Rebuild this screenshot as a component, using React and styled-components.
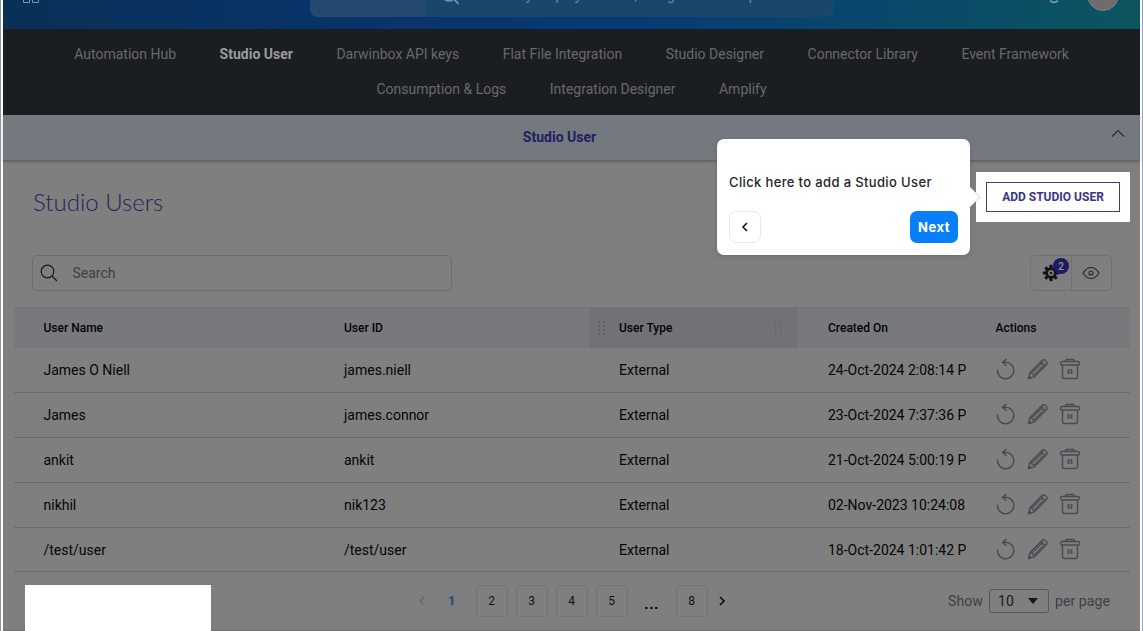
import styled, { createGlobalStyle } from 'styled-components';

const GlobalStyle = createGlobalStyle`
  * {
    box-sizing: border-box;
  }

  body {
    background: #fff;
    font-family: Roboto, sans-serif;
    margin: 0;
    overflow: hidden;
  }

  button {
    font-family: inherit;
    margin: 0;
    padding: 0;
  }
`;

const Frame = styled.div`
  border-left: 1px solid #87979e;
  border-right: 1px solid #8fa3bb;
  height: 631px;
  overflow: hidden;
  padding: 0 2px;
  position: relative;
`;

const Page = styled.div`
  background: #7f7f7f;
  border-bottom: 1px solid #6f6f70;
  display: flex;
  flex-direction: column;
  height: 631px;
`;

const TopBar = styled.header`
  background: linear-gradient(90deg, #093057 0%, #08346a 33%, #083a75 55%, #094a6a 80%, #0d5460 100%);
  display: flex;
  flex: none;
  height: 29px;
  justify-content: space-between;
  overflow: hidden;
`;

const TopSide = styled.div`
  display: flex;
  gap: 23px;
  justify-content: ${({ end }) => (end ? 'flex-end' : 'flex-start')};
  padding: 0 21px 0 20px;
  width: 307px;
`;

const AppsIcon = styled.svg`
  margin-top: -13px;
`;

const BellIcon = styled.svg`
  margin-top: -17px;
`;

const Avatar = styled.div`
  background: #726b6a;
  border: 1px solid #6d8389;
  border-radius: 50%;
  height: 32px;
  margin-top: -21px;
  width: 32px;
`;

const GlobalSearch = styled.div`
  background: #19476c;
  border-radius: 0 0 8px 8px;
  color: #6d8ba3;
  display: flex;
  flex: none;
  font-size: 14px;
  height: 17px;
  overflow: hidden;
  width: 524px;
`;

const SearchScope = styled.div`
  background: #26496f;
  width: 116px;
`;

const GlobalSearchIcon = styled.svg`
  flex: none;
  margin: -15px 12px 0 14px;
`;

const GlobalPlaceholder = styled.span`
  line-height: 16px;
  margin-top: -13px;
  white-space: nowrap;
`;

const Nav = styled.nav`
  align-content: flex-start;
  background: #1b1e20;
  color: #68696a;
  column-gap: 43.5px;
  display: flex;
  flex: none;
  flex-wrap: wrap;
  font-size: 14px;
  height: 86px;
  justify-content: center;
  line-height: 35px;
  padding: 8px 50px;
`;

const NavItem = styled.a`
  color: ${({ active }) => (active ? '#9a9b9c' : 'inherit')};
  font-weight: ${({ active }) => (active ? 700 : 400)};
`;

const SubBar = styled.div`
  align-items: center;
  background: #74787f;
  border-bottom: 1px solid #606367;
  box-shadow: 0 1px 3px rgba(0, 0, 0, 0.2);
  display: flex;
  flex: none;
  height: 46px;
  padding: 0 15px 1px 0;
`;

const SubTitle = styled.strong`
  color: #1f1f62;
  flex: 1;
  font-size: 14px;
  padding-left: 5px;
  text-align: center;
`;

const CollapseIcon = styled.svg`
  margin: -7px 0 0;
`;

const TitleRow = styled.div`
  align-items: center;
  display: flex;
  flex: none;
  height: 50px;
  justify-content: space-between;
  margin-top: 11px;
  padding: 0 10px 0 30px;
`;

const Title = styled.h1`
  color: #24245c;
  font-family: Lato, sans-serif;
  font-size: 24px;
  font-weight: 300;
  margin: 8px 0 0;
`;

const Spotlight = styled.div`
  background: #fff;
  height: 50px;
  padding: 10px;
  width: 154px;
`;

const AddButton = styled.button`
  background: #fff;
  border: 1px solid #3f4073;
  color: #373785;
  font-size: 12px;
  font-weight: 700;
  height: 30px;
  width: 134px;
`;

const Toolbar = styled.div`
  display: flex;
  flex: none;
  height: 36px;
  justify-content: space-between;
  margin: 33px 28px 16px 29px;
`;

const SearchBox = styled.label`
  align-items: center;
  border: 1px solid #6b6d70;
  border-radius: 5px;
  color: #3c4045;
  display: flex;
  font-size: 14px;
  gap: 14.5px;
  padding-left: 7px;
  width: 420px;
`;

const ToolGroup = styled.div`
  border: 1px solid #707173;
  border-radius: 5px;
  display: flex;
  width: 82px;
`;

const Tool = styled.div`
  align-items: center;
  display: flex;
  flex: 1;
  justify-content: center;
  position: relative;

  & + & {
    border-left: 1px solid #707173;
  }
`;

const Badge = styled.span`
  background: #1c1c61;
  border-radius: 50%;
  color: #93939f;
  font-size: 10px;
  font-weight: 500;
  height: 16px;
  left: 22px;
  line-height: 17px;
  position: absolute;
  text-align: center;
  top: 2px;
  width: 16px;
`;

const Table = styled.div`
  margin: 0 10px 0 11px;
`;

const Row = styled.div`
  align-items: center;
  border-bottom: 1px solid #6a6a6b;
  display: grid;
  font-size: 14px;
  grid-template-columns: 300px 275px 209px 167.5px 1fr;
  height: 45px;

  &:last-child {
    height: 44px;
  }
`;

const HeadRow = styled(Row)`
  background: #78797c;
  border-bottom: 0;
  border-top: 1px solid #727479;
  font-size: 12px;
  font-weight: 500;
  height: 41px;
`;

const Cell = styled.div`
  color: #050505;
  overflow: hidden;
  padding-left: 30px;
  white-space: nowrap;

  &:first-child {
    padding-left: 29.5px;
  }
`;

const HeadCell = styled.div`
  align-items: center;
  align-self: stretch;
  background: ${({ active }) => (active ? '#717177' : 'transparent')};
  color: #030303;
  display: flex;
  justify-content: space-between;
  padding: 0 14px 0 30px;
  position: relative;

  &:first-child {
    padding-left: 29.5px;
  }
`;

const DragHandle = styled.svg`
  left: 8px;
  position: absolute;
`;

const Actions = styled.div`
  display: flex;
  gap: 10px;
  padding: 0 0 2px 29px;
`;

const Footer = styled.footer`
  align-items: center;
  display: flex;
  flex: 1;
  padding: 0 28px 0 22px;
`;

const BlankPanel = styled.div`
  align-self: flex-end;
  background: #fff;
  height: 46px;
  margin-bottom: -1px;
  width: 186px;
`;

const Pager = styled.div`
  display: flex;
  gap: 8px;
  margin-left: 207.6px;
`;

const PageButton = styled.button`
  background: ${({ active }) => (active ? '#7c7e80' : 'transparent')};
  border: 1px solid ${({ active }) => (active ? '#7c7e80' : '#747475')};
  border-radius: 3px;
  color: ${({ active }) => (active ? '#1f4670' : '#111')};
  font-size: 12px;
  font-weight: ${({ active }) => (active ? 700 : 400)};
  height: 32px;
  width: 32px;
`;

const Ellipsis = styled.span`
  font-size: 15px;
  font-weight: 700;
  height: 32px;
  letter-spacing: 0.5px;
  line-height: 38px;
  text-align: center;
  width: 32px;
`;

const Arrow = styled.svg`
  margin: 10px ${({ next }) => (next ? '0 0 2px' : '2px 0 -1px')};
`;

const PerPage = styled.div`
  align-items: center;
  color: #3c4045;
  display: flex;
  font-size: 14px;
  gap: 6px;
  letter-spacing: 0.1px;
  margin-left: auto;
  margin-right: 2px;
`;

const Select = styled.div`
  align-items: center;
  border: 1px solid #58595b;
  border-radius: 3px;
  color: #1a1a1a;
  display: flex;
  height: 24px;
  justify-content: space-between;
  padding: 0 10px 0 8px;
  width: 60px;
`;

const Popover = styled.div`
  background: #fff;
  border-radius: 7px;
  box-shadow: 0 2px 6px rgba(0, 0, 0, 0.14);
  display: flex;
  flex-direction: column;
  font-family: Inter, sans-serif;
  height: 116px;
  justify-content: space-between;
  left: 716px;
  padding: 34px 12px 12px;
  position: absolute;
  top: 139px;
  width: 253px;
`;

const PopoverArrow = styled.svg`
  position: absolute;
  right: -11px;
  top: 47px;
`;

const PopoverText = styled.p`
  color: #22252b;
  font-size: 13px;
  font-weight: 500;
  letter-spacing: 0.36px;
  line-height: 19px;
  margin: 0;
  white-space: nowrap;
`;

const PopoverActions = styled.div`
  display: flex;
  justify-content: space-between;
`;

const BackButton = styled.button`
  align-items: center;
  background: #fff;
  border: 1px solid #e9e9eb;
  border-radius: 7px;
  display: flex;
  height: 32px;
  justify-content: center;
  width: 32px;
`;

const NextButton = styled.button`
  background: #087ff8;
  border: 0;
  border-radius: 7px;
  color: #fff;
  font-size: 13px;
  font-weight: 700;
  height: 32px;
  letter-spacing: 0.5px;
  width: 48px;
`;

const navItems = [
  'Automation Hub',
  'Studio User',
  'Darwinbox API keys',
  'Flat File Integration',
  'Studio Designer',
  'Connector Library',
  'Event Framework',
  'Consumption & Logs',
  'Integration Designer',
  'Amplify',
];

const users = [
  { name: 'James O Niell', id: 'james.niell', created: '24-Oct-2024 2:08:14 P' },
  { name: 'James', id: 'james.connor', created: '23-Oct-2024 7:37:36 P' },
  { name: 'ankit', id: 'ankit', created: '21-Oct-2024 5:00:19 P' },
  { name: 'nikhil', id: 'nik123', created: '02-Nov-2023 10:24:08' },
  { name: '/test/user', id: '/test/user', created: '18-Oct-2024 1:01:42 P' },
];

const gearTeeth = [0, 45, 90, 135, 180, 225, 270, 315];

const GearIcon = () => (
  <svg width="18" height="18" viewBox="0 0 18 18" fill="#151515">
    {gearTeeth.map((angle) => (
      <rect key={angle} x="7.4" y="0.8" width="3.2" height="5" rx="1" transform={`rotate(${angle} 9 9)`} />
    ))}
    <circle cx="9" cy="9" r="4.4" fill="none" stroke="#151515" strokeWidth="2.8" />
    <circle cx="9" cy="9" r="1.3" />
  </svg>
);

const EyeIcon = () => (
  <svg width="18" height="14" viewBox="0 0 18 14" fill="none" stroke="#262626" strokeWidth="1.1">
    <path d="M1 7Q4.5 1.5 9 1.5T17 7Q13.5 12.5 9 12.5T1 7Z" />
    <circle cx="9" cy="7" r="2" />
  </svg>
);

const RowActions = () => (
  <Actions>
    <svg width="22" height="22" viewBox="0 0 22 22" fill="none" stroke="#474c53" strokeWidth="1.5">
      <path d="M2.5 11.5A8.2 8.2 0 1 0 10.7 4.3H8" />
      <path d="M11.5 1L7.5 4.3L11.5 7.8" />
    </svg>
    <svg width="22" height="22" viewBox="0 0 22 22" fill="none" stroke="#474c53" strokeWidth="1.3" strokeLinejoin="round">
      <path d="M1.5 20.5L3 14.5L15 2.5Q16.7 .9 18.5 2.6L19.3 3.4Q21 5.2 19.4 6.9L7.4 18.9Z" />
      <path d="M3 14.5L5 15L5.3 16.7L7.2 17L7.4 18.9M5 15L16.2 3.8M7.2 17L18.3 5.8M13.5 4L18 8.4" />
      <path d="M1.5 20.5L2.2 18L4 19.8Z" fill="#474c53" />
    </svg>
    <svg width="22" height="22" viewBox="0 0 22 22" fill="none" stroke="#474c53" strokeWidth="1.4">
      <rect x="1.5" y="3.5" width="19" height="3.5" rx="1.5" />
      <path d="M6 3.5L7.5 1.5H14.5L16 3.5M3.5 7V19Q3.5 20.5 5 20.5H17Q18.5 20.5 18.5 19V7" />
      <path d="M9.5 11V16M12.5 11V16" strokeWidth="1.8" />
    </svg>
  </Actions>
);

const TableHeader = () => (
  <HeadRow>
    <HeadCell>User Name</HeadCell>
    <HeadCell>User ID</HeadCell>
    <HeadCell active>
      <DragHandle width="10" height="16" viewBox="0 0 10 16" fill="#55555d">
        {[1, 5, 9, 13].map((y) => (
          <g key={y}>
            <rect x="1.5" y={y} width="1.5" height="1.5" />
            <rect x="6" y={y} width="1.5" height="1.5" />
          </g>
        ))}
      </DragHandle>
      User Type
      <svg width="12" height="14" viewBox="0 0 12 14" fill="none" stroke="#67676f">
        <path d="M3.5 13V1.5M1.5 3.5L3.5 1.5M8.5 1V12.5M8.5 12.5L10.5 10.5" />
      </svg>
    </HeadCell>
    <HeadCell>Created On</HeadCell>
    <HeadCell>Actions</HeadCell>
  </HeadRow>
);

const Pagination = () => (
  <Pager>
    <Arrow width="8" height="12" viewBox="0 0 8 12" fill="none" stroke="#666" strokeWidth="1.3">
      <path d="M6 2L2 6L6 10" />
    </Arrow>
    {[1, 2, 3, 4, 5].map((page) => (
      <PageButton key={page} active={page === 1}>
        {page}
      </PageButton>
    ))}
    <Ellipsis>...</Ellipsis>
    <PageButton>8</PageButton>
    <Arrow next width="8" height="12" viewBox="0 0 8 12" fill="none" stroke="#0c0c0c" strokeWidth="1.6">
      <path d="M2 2L6 6L2 10" />
    </Arrow>
  </Pager>
);

const TourPopover = () => (
  <Popover>
    <PopoverArrow width="12" height="22" viewBox="0 0 12 22">
      <path d="M0 0L11 11L0 22Z" fill="#fff" />
      <path d="M6 6L11 11L6 16" fill="none" stroke="#d8d8d8" />
    </PopoverArrow>
    <PopoverText>Click here to add a Studio User</PopoverText>
    <PopoverActions>
      <BackButton aria-label="Back">
        <svg width="8" height="12" viewBox="0 0 8 12" fill="none" stroke="#202124" strokeWidth="1.7">
          <path d="M6 2L2 6L6 10" />
        </svg>
      </BackButton>
      <NextButton>Next</NextButton>
    </PopoverActions>
  </Popover>
);

const App = () => {
  return (
    <Frame>
      <GlobalStyle />
      <Page>
        <TopBar>
          <TopSide>
            <AppsIcon width="16" height="16" viewBox="0 0 16 16" fill="none" stroke="#8095a8">
              <path d="M.5 .5H6.5V6.5H.5ZM9.5 .5H15.5V6.5H9.5ZM.5 9.5H6.5V15.5H.5ZM9.5 9.5H15.5V15.5H9.5Z" />
            </AppsIcon>
          </TopSide>
          <GlobalSearch>
            <SearchScope />
            <GlobalSearchIcon width="20" height="20" viewBox="0 0 20 20" fill="none" stroke="#8298ac" strokeWidth="1.6">
              <circle cx="9" cy="9" r="7" />
              <path d="M14 14L18.5 19" />
            </GlobalSearchIcon>
            <GlobalPlaceholder>Search by employee name, designation or department</GlobalPlaceholder>
          </GlobalSearch>
          <TopSide end>
            <BellIcon width="20" height="22" viewBox="0 0 20 22" fill="none" stroke="#8ba2a9" strokeWidth="1.5">
              <path d="M3 16H17L15.5 13V8A5.5 5.5 0 0 0 4.5 8V13ZM6 17.5Q10 21.5 14 17.5" />
            </BellIcon>
            <Avatar />
          </TopSide>
        </TopBar>
        <Nav>
          {navItems.map((item) => (
            <NavItem key={item} active={item === 'Studio User'}>
              {item}
            </NavItem>
          ))}
        </Nav>
        <SubBar>
          <SubTitle>Studio User</SubTitle>
          <CollapseIcon width="14" height="9" viewBox="0 0 14 9" fill="none" stroke="#282b30" strokeWidth="1.2">
            <path d="M1 7.5L7 1.5L13 7.5" />
          </CollapseIcon>
        </SubBar>
        <TitleRow>
          <Title>Studio Users</Title>
          <Spotlight>
            <AddButton>ADD STUDIO USER</AddButton>
          </Spotlight>
        </TitleRow>
        <Toolbar>
          <SearchBox>
            <svg width="18" height="18" viewBox="0 0 18 18" fill="none" stroke="#1b1b1b" strokeWidth="1.2">
              <circle cx="7.5" cy="7.5" r="6.3" />
              <path d="M12 12L17 17" />
            </svg>
            Search
          </SearchBox>
          <ToolGroup>
            <Tool>
              <GearIcon />
              <Badge>2</Badge>
            </Tool>
            <Tool>
              <EyeIcon />
            </Tool>
          </ToolGroup>
        </Toolbar>
        <Table>
          <TableHeader />
          {users.map((user) => (
            <Row key={user.name}>
              <Cell>{user.name}</Cell>
              <Cell>{user.id}</Cell>
              <Cell>External</Cell>
              <Cell>{user.created}</Cell>
              <RowActions />
            </Row>
          ))}
        </Table>
        <Footer>
          <BlankPanel />
          <Pagination />
          <PerPage>
            Show
            <Select>
              10
              <svg width="10" height="6" viewBox="0 0 10 6">
                <path d="M0 0H10L5 6Z" fill="#161616" />
              </svg>
            </Select>
            per page
          </PerPage>
        </Footer>
      </Page>
      <TourPopover />
    </Frame>
  );
};

export default App;
